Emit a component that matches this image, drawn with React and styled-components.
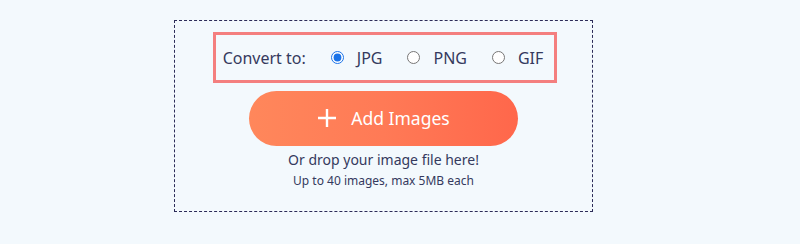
import React, { useState } from "react";
import styled, { createGlobalStyle } from "styled-components";

const GlobalStyle = createGlobalStyle`
  html, body {
    margin: 0;
    padding: 0;
    background: #f3f9fd;
    font-family: "Noto Sans", "Open Sans", sans-serif;
  }
`;

const Page = styled.div`
  width: 800px;
  height: 244px;
  padding: 20px 0 0 174px;
  box-sizing: border-box;
`;

const DropZone = styled.div`
  width: 419px;
  height: 192px;
  box-sizing: border-box;
  border: 1px dashed #2c2c58;
  display: flex;
  flex-direction: column;
  align-items: center;
  padding-top: 11px;
`;

const FormatBox = styled.div`
  display: flex;
  align-items: center;
  height: 51px;
  box-sizing: border-box;
  border: 3px solid #f47f7f;
  padding: 0 11px 0 7px;
  margin-left: 3px;
  color: #353a5e;
  font-size: 16px;
`;

const Label = styled.span`
  margin-right: 25px;
`;

const Option = styled.label`
  display: flex;
  align-items: center;
  gap: 13px;
  margin-left: ${(p) => (p.$first ? "0" : "25px")};
  cursor: pointer;
`;

const Radio = styled.input`
  margin: 0;
  width: 13px;
  height: 13px;
  accent-color: #1a73e8;
`;

const AddButton = styled.button`
  margin-top: 8px;
  width: 269px;
  height: 55px;
  border: none;
  border-radius: 28px;
  background: linear-gradient(90deg, #ff875b 0%, #ff7a56 50%, #ff674b 100%);
  color: #fff;
  font-family: inherit;
  font-size: 17.5px;
  display: flex;
  align-items: center;
  justify-content: center;
  gap: 14px;
  cursor: pointer;
  padding: 0 0 2px 0;
`;

const Hint = styled.div`
  color: #353a5e;
  font-size: ${(p) => (p.$small ? "12px" : "14px")};
  margin-top: ${(p) => (p.$small ? "3px" : "4px")};
  line-height: ${(p) => (p.$small ? "16px" : "20px")};
`;

const formats = ["JPG", "PNG", "GIF"];

export default function App() {
  const [format, setFormat] = useState("JPG");

  return (
    <>
      <GlobalStyle />
      <Page>
        <DropZone>
          <FormatBox>
            <Label>Convert to:</Label>
            {formats.map((f, i) => (
              <Option key={f} $first={i === 0}>
                <Radio
                  type="radio"
                  name="format"
                  checked={format === f}
                  onChange={() => setFormat(f)}
                />
                {f}
              </Option>
            ))}
          </FormatBox>
          <AddButton>
            <svg width="20" height="20" viewBox="0 0 20 20">
              <path d="M10 1v18M1 10h18" stroke="#fff" strokeWidth="2.4" />
            </svg>
            Add Images
          </AddButton>
          <Hint>Or drop your image file here!</Hint>
          <Hint $small>Up to 40 images, max 5MB each</Hint>
        </DropZone>
      </Page>
    </>
  );
}
